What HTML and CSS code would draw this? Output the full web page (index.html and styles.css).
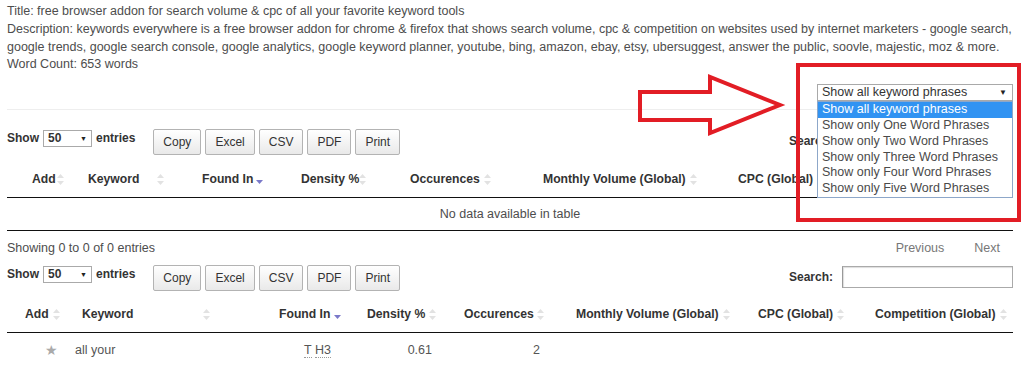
FILE: index.html
```html
<!DOCTYPE html>
<html lang="en">
<head>
    <meta charset="UTF-8">
    <meta name="viewport" content="width=device-width, initial-scale=1.0">
    <title>Keyword Density</title>
    <link rel="stylesheet" href="styles.css">
</head>
<body>

<div class="page">
    <!-- Page meta -->
    <div class="meta">
        <div>Title: free browser addon for search volume &amp; cpc of all your favorite keyword tools</div>
        <div>Description: keywords everywhere is a free browser addon for chrome &amp; firefox that shows search volume, cpc &amp; competition on websites used by internet marketers - google search, google trends, google search console, google analytics, google keyword planner, youtube, bing, amazon, ebay, etsy, ubersuggest, answer the public, soovle, majestic, moz &amp; more.</div>
        <div>Word Count: 653 words</div>
    </div>

    <!-- Phrase filter (shown open) -->
    <div class="filter-row">
        <div class="phrase-select">
            <span>Show all keyword phrases</span>
            <span class="caret">&#9660;</span>
            <ul class="phrase-list">
                <li class="selected">Show all keyword phrases</li>
                <li>Show only One Word Phrases</li>
                <li>Show only Two Word Phrases</li>
                <li>Show only Three Word Phrases</li>
                <li>Show only Four Word Phrases</li>
                <li>Show only Five Word Phrases</li>
            </ul>
        </div>
    </div>

    <hr class="sep">

    <!-- First table -->
    <section class="dt dt-top">
        <div class="dt-controls">
            <div class="dt-length">
                <b>Show</b>
                <span class="len-select"><b>50</b><span class="caret">&#9660;</span></span>
                <b>entries</b>
            </div>
            <div class="dt-buttons">
                <button class="dt-button">Copy</button>
                <button class="dt-button">Excel</button>
                <button class="dt-button">CSV</button>
                <button class="dt-button">PDF</button>
                <button class="dt-button">Print</button>
            </div>
            <div class="dt-search">
                <b>Search:</b>
                <span class="search-input"></span>
            </div>
        </div>
        <div class="dt-head">
            <div class="th"><span>Add</span><svg class="sort"><use href="#sort-both"/></svg></div>
            <div class="th"><span>Keyword</span><svg class="sort"><use href="#sort-both"/></svg></div>
            <div class="th"><span>Found In</span><svg class="sort"><use href="#sort-desc"/></svg></div>
            <div class="th"><span>Density %</span><svg class="sort"><use href="#sort-both"/></svg></div>
            <div class="th"><span>Occurences</span><svg class="sort"><use href="#sort-both"/></svg></div>
            <div class="th"><span>Monthly Volume (Global)</span><svg class="sort"><use href="#sort-both"/></svg></div>
            <div class="th"><span>CPC (Global)</span><svg class="sort"><use href="#sort-both"/></svg></div>
            <div class="th"><span>Competition (Global)</span><svg class="sort"><use href="#sort-both"/></svg></div>
        </div>
        <div class="dt-empty">No data available in table</div>
        <div class="dt-info-row">
            <span>Showing 0 to 0 of 0 entries</span>
            <div class="paginate">
                <span class="page-btn">Previous</span>
                <span class="page-btn">Next</span>
            </div>
        </div>
    </section>

    <!-- Second table -->
    <section class="dt dt-bottom">
        <div class="dt-controls">
            <div class="dt-length">
                <b>Show</b>
                <span class="len-select"><b>50</b><span class="caret">&#9660;</span></span>
                <b>entries</b>
            </div>
            <div class="dt-buttons">
                <button class="dt-button">Copy</button>
                <button class="dt-button">Excel</button>
                <button class="dt-button">CSV</button>
                <button class="dt-button">PDF</button>
                <button class="dt-button">Print</button>
            </div>
            <div class="dt-search">
                <b>Search:</b>
                <span class="search-input"></span>
            </div>
        </div>
        <div class="dt-head">
            <div class="th"><span>Add</span><svg class="sort"><use href="#sort-both"/></svg></div>
            <div class="th"><span>Keyword</span><svg class="sort"><use href="#sort-both"/></svg></div>
            <div class="th"><span>Found In</span><svg class="sort"><use href="#sort-desc"/></svg></div>
            <div class="th"><span>Density %</span><svg class="sort"><use href="#sort-both"/></svg></div>
            <div class="th"><span>Occurences</span><svg class="sort"><use href="#sort-both"/></svg></div>
            <div class="th"><span>Monthly Volume (Global)</span><svg class="sort"><use href="#sort-both"/></svg></div>
            <div class="th"><span>CPC (Global)</span><svg class="sort"><use href="#sort-both"/></svg></div>
            <div class="th"><span>Competition (Global)</span><svg class="sort"><use href="#sort-both"/></svg></div>
        </div>
        <div class="dt-row">
            <div class="td td-add"><span class="star">&#9733;</span></div>
            <div class="td td-kw">all your</div>
            <div class="td td-found"><abbr>T</abbr> <abbr>H3</abbr></div>
            <div class="td td-num">0.61</div>
            <div class="td td-num">2</div>
            <div class="td"></div>
            <div class="td"></div>
            <div class="td"></div>
        </div>
    </section>

    <!-- Annotation drawn over the screenshot -->
    <div class="callout-box"></div>
    <svg class="callout-arrow" width="152" height="68" viewBox="0 0 152 68">
        <polygon points="4,20 74,20 74,5 144,33 74,61 74,48 4,48" fill="none" stroke="#e21d25" stroke-width="4"/>
    </svg>
</div>

<!-- Sort icons -->
<svg width="0" height="0" style="position:absolute">
    <defs>
        <symbol id="sort-both" viewBox="0 0 7 11">
            <polygon points="3.5,0 7,4 0,4" fill="#e2e2e2"/>
            <polygon points="0,7 7,7 3.5,11" fill="#e2e2e2"/>
        </symbol>
        <symbol id="sort-desc" viewBox="0 0 7 11">
            <polygon points="0,6 7,6 3.5,10" fill="#7a79c9"/>
        </symbol>
    </defs>
</svg>

</body>
</html>
```

FILE: styles.css
```css
/* Base */
body {
    margin: 0;
    background: #fff;
    font-family: "Liberation Sans", Arial, Helvetica, sans-serif;
    color: #333;
}

.page {
    position: relative;
    padding: 0 11px 0 7px;
}

/* --- Page meta --- */
.meta {
    padding-top: 3px;
    font-size: 12.5px;
    line-height: 17.8px;
    color: #4d4d4d;
}

/* --- Phrase filter dropdown --- */
.filter-row {
    display: flex;
    justify-content: flex-end;
    margin-top: 10px;
    position: relative;
    z-index: 3;
}

.phrase-select {
    position: relative;
    width: 196px;
    height: 17px;
    box-sizing: border-box;
    border: 1px solid #a9a9a9;
    background: #fff;
    font-size: 12.5px;
    line-height: 15px;
    color: #333;
    padding-left: 4px;
    display: flex;
    justify-content: space-between;
}
.phrase-select .caret {
    font-size: 8px;
    padding-right: 5px;
    color: #222;
}

.phrase-list {
    position: absolute;
    top: 16px;
    left: -1px;
    width: 196px;
    box-sizing: border-box;
    margin: 0;
    padding: 0;
    list-style: none;
    background: #fff;
    border: 1px solid #8da7c9;
}
.phrase-list li {
    height: 15.8px;
    line-height: 15.8px;
    padding-left: 4px;
    color: #4a4a4a;
}
.phrase-list .selected {
    background: #3193f2;
    color: #fff;
}

hr.sep {
    margin: 8px 0 19px;
    border: 0;
    border-top: 1px solid #eee;
}

/* --- DataTables look --- */
.dt-controls {
    display: flex;
    align-items: flex-start;
    height: 26px;
}

.dt-length {
    display: flex;
    align-items: center;
    gap: 4px;
    height: 18px;
    font-size: 12px;
    color: #333;
}
.len-select {
    display: flex;
    justify-content: space-between;
    align-items: center;
    width: 49px;
    height: 17px;
    box-sizing: border-box;
    border: 1px solid #aaa;
    padding: 0 4px 0 4px;
    font-size: 12px;
}
.len-select .caret {
    font-size: 7px;
    color: #222;
}

.dt-buttons {
    display: flex;
    gap: 4px;
    margin-left: 18px;
}
.dt-button {
    height: 26px;
    margin: 0;
    box-sizing: border-box;
    padding: 0 9px;
    border: 1px solid #b3b3b3;
    border-radius: 2px;
    background: linear-gradient(to bottom, #fff 0%, #e9e9e9 100%);
    font-family: "Liberation Sans", Arial, sans-serif;
    font-size: 12px;
    color: #333;
}

.dt-search {
    margin-left: auto;
    display: flex;
    align-items: center;
    gap: 9px;
    height: 22px;
    margin-top: 1px;
    font-size: 12px;
}
.search-input {
    width: 171px;
    height: 22px;
    box-sizing: border-box;
    border: 1px solid #aaa;
    border-left-color: #999;
    box-shadow: inset 1px 1px 1px #ddd;
}

.dt-head {
    display: grid;
    margin-top: 5px;
    height: 36px;
    border-bottom: 1px solid #111;
}
.dt-top .dt-head {
    margin-top: 6px;
}
.dt-top .dt-head,
.dt-top .dt-empty {
    grid-template-columns: 62px 100px 99px 103px 125px 206px 148px 163px;
}
.dt-bottom .dt-head,
.dt-bottom .dt-row {
    grid-template-columns: 58px 150px 131px 95px 108px 186px 114px 163px;
}

.th {
    display: flex;
    align-items: center;
    padding-right: 5px;
    font-size: 12.2px;
    font-weight: bold;
    color: #333;
    white-space: nowrap;
}
.th .sort {
    width: 7px;
    height: 11px;
    margin-left: auto;
    flex: none;
}

/* header text offsets */
.dt-top .th:nth-child(1) { padding-left: 25px; }
.dt-top .th:nth-child(2) { padding-left: 19px; }
.dt-top .th:nth-child(3) { padding-left: 33px; }
.dt-top .th:nth-child(4) { padding-left: 33px; }
.dt-top .th:nth-child(5) { padding-left: 39px; }
.dt-top .th:nth-child(6) { padding-left: 47px; }
.dt-top .th:nth-child(7) { padding-left: 36px; }
.dt-top .th:nth-child(8) { padding-left: 26px; }

.dt-bottom .th:nth-child(1) { padding-left: 18px; }
.dt-bottom .th:nth-child(2) { padding-left: 17px; }
.dt-bottom .th:nth-child(3) { padding-left: 64px; }
.dt-bottom .th:nth-child(4) { padding-left: 21px; }
.dt-bottom .th:nth-child(5) { padding-left: 23px; }
.dt-bottom .th:nth-child(6) { padding-left: 27px; }
.dt-bottom .th:nth-child(7) { padding-left: 23px; }
.dt-bottom .th:nth-child(8) { padding-left: 26px; }

.dt-empty {
    height: 32px;
    line-height: 32px;
    text-align: center;
    font-size: 12.5px;
    color: #4d4d4d;
    border-bottom: 1px solid #111;
}

.dt-info-row {
    display: flex;
    justify-content: space-between;
    margin-top: 8px;
    height: 18px;
    line-height: 18px;
    font-size: 12.5px;
    color: #4d4d4d;
}
.paginate {
    display: flex;
    gap: 30px;
    padding-right: 13px;
}
.page-btn {
    color: #777;
}

.dt-bottom {
    margin-top: 8px;
}

.dt-row {
    display: grid;
    height: 34px;
    align-items: center;
    font-size: 12.5px;
    color: #555;
}
.td-add {
    text-align: right;
    padding-right: 7px;
}
.star {
    color: #aaa;
    font-size: 14px;
}
.td-kw {
    padding-left: 10px;
}
.td-found {
    text-align: right;
    padding-right: 15px;
}
.td-found abbr {
    text-decoration: none;
    border-bottom: 1px dotted #999;
}
.td-num {
    text-align: right;
    padding-right: 9px;
}

/* --- Red annotation --- */
.callout-box {
    position: absolute;
    left: 796px;
    top: 63px;
    width: 225px;
    height: 159px;
    box-sizing: border-box;
    border: 4px solid #e21d25;
    z-index: 2;
}

.callout-arrow {
    position: absolute;
    left: 636px;
    top: 72px;
    z-index: 2;
}
```
